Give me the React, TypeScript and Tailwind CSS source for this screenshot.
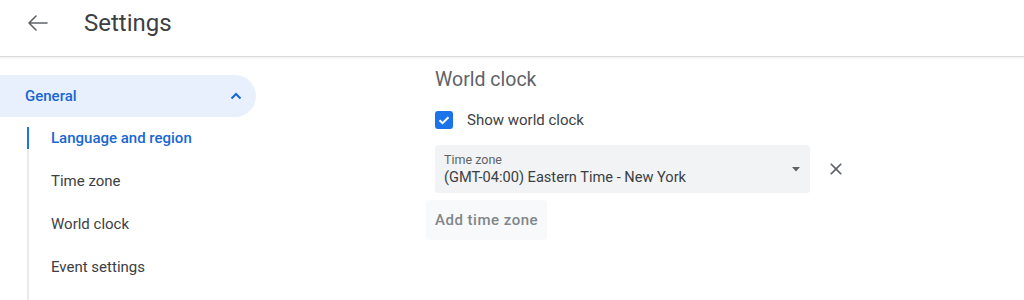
import React from "react";

export default function App() {
  const font = { fontFamily: "Roboto, 'Noto Sans', Arial, sans-serif" };
  return (
    <div className="w-[1024px] h-[300px] overflow-hidden bg-white" style={font}>
      <header className="h-[57px] flex items-center pb-[10px] border-b border-[#dadce0] shadow-[0_1px_2px_rgba(60,64,67,0.10)]">
        <div className="w-[84px] flex items-center pl-[27px]">
          <svg width="22" height="16" viewBox="0 0 22 16" fill="none" stroke="#5f6368" strokeWidth="1.6" strokeLinecap="round" strokeLinejoin="round">
            <path d="M20 8H2M9 1L2 8l7 7" />
          </svg>
        </div>
        <h1 className="text-[24px] leading-[28px] text-[#3c4043]">Settings</h1>
      </header>
      <div className="flex">
        <nav className="w-[256px] shrink-0 pt-[18px]">
          <div className="h-[42px] rounded-r-full bg-[#e8f0fe] flex items-center justify-between pl-[25px] pr-[14px]">
            <span className="text-[15px] font-medium text-[#1967d2]">General</span>
            <svg width="12" height="8" viewBox="0 0 12 8" fill="none" stroke="#1967d2" strokeWidth="2">
              <path d="M1.5 6.5L6 2l4.5 4.5" />
            </svg>
          </div>
          <div className="mt-[10px] ml-[27px] border-l-2 border-[#e8eaed] flex flex-col gap-[21px] pb-[40px]">
            <div className="-ml-[2px] border-l-2 border-[#1a73e8] pl-[22px] h-[22px] flex items-center text-[15px] font-medium text-[#1967d2]">
              Language and region
            </div>
            <div className="pl-[22px] h-[22px] flex items-center text-[15px] text-[#3c4043]">Time zone</div>
            <div className="pl-[22px] h-[22px] flex items-center text-[15px] text-[#3c4043]">World clock</div>
            <div className="pl-[22px] h-[22px] flex items-center text-[15px] text-[#3c4043]">Event settings</div>
          </div>
        </nav>
        <main className="flex-1 pl-[179px] pt-[11px]">
          <h2 className="text-[19.5px] leading-[24px] text-[#5f6368]">World clock</h2>
          <div className="mt-[16px] h-[24px] flex items-center gap-[14px]">
            <div className="w-[18px] h-[18px] rounded-[3px] bg-[#1a73e8] flex items-center justify-center">
              <svg width="14" height="14" viewBox="0 0 14 14" fill="none" stroke="white" strokeWidth="2">
                <path d="M2.5 7.2l3 3 6-6" />
              </svg>
            </div>
            <span className="text-[15px] text-[#3c4043]">Show world clock</span>
          </div>
          <div className="mt-[13px] flex items-center">
            <div className="w-[375px] h-[48px] bg-[#f1f3f4] rounded-t-[4px] rounded-b-[3px] pl-[9px] pr-[10px] pt-[7px] flex justify-between">
              <div className="flex flex-col">
                <span className="text-[12.5px] leading-[16px] text-[#5f6368]">Time zone</span>
                <span className="text-[14.6px] leading-[18px] text-[#3c4043]">(GMT-04:00) Eastern Time - New York</span>
              </div>
              <svg width="8" height="5" viewBox="0 0 8 5" className="mt-[15px]">
                <path d="M0 0h8L4 4.5z" fill="#5f6368" />
              </svg>
            </div>
            <div className="ml-[16px] w-[20px] h-[20px] flex items-center justify-center">
              <svg width="20" height="20" viewBox="0 0 24 24">
                <path fill="#5f6368" d="M19 6.41L17.59 5 12 10.59 6.41 5 5 6.41 10.59 12 5 17.59 6.41 19 12 13.41 17.59 19 19 17.59 13.41 12z" />
              </svg>
            </div>
          </div>
          <button className="mt-[7px] -ml-[9px] h-[40px] px-[9px] rounded-[4px] bg-[#f8f9fa] text-[15px] tracking-[0.5px] font-medium text-[#80868b]">
            Add time zone
          </button>
        </main>
      </div>
    </div>
  );
}
